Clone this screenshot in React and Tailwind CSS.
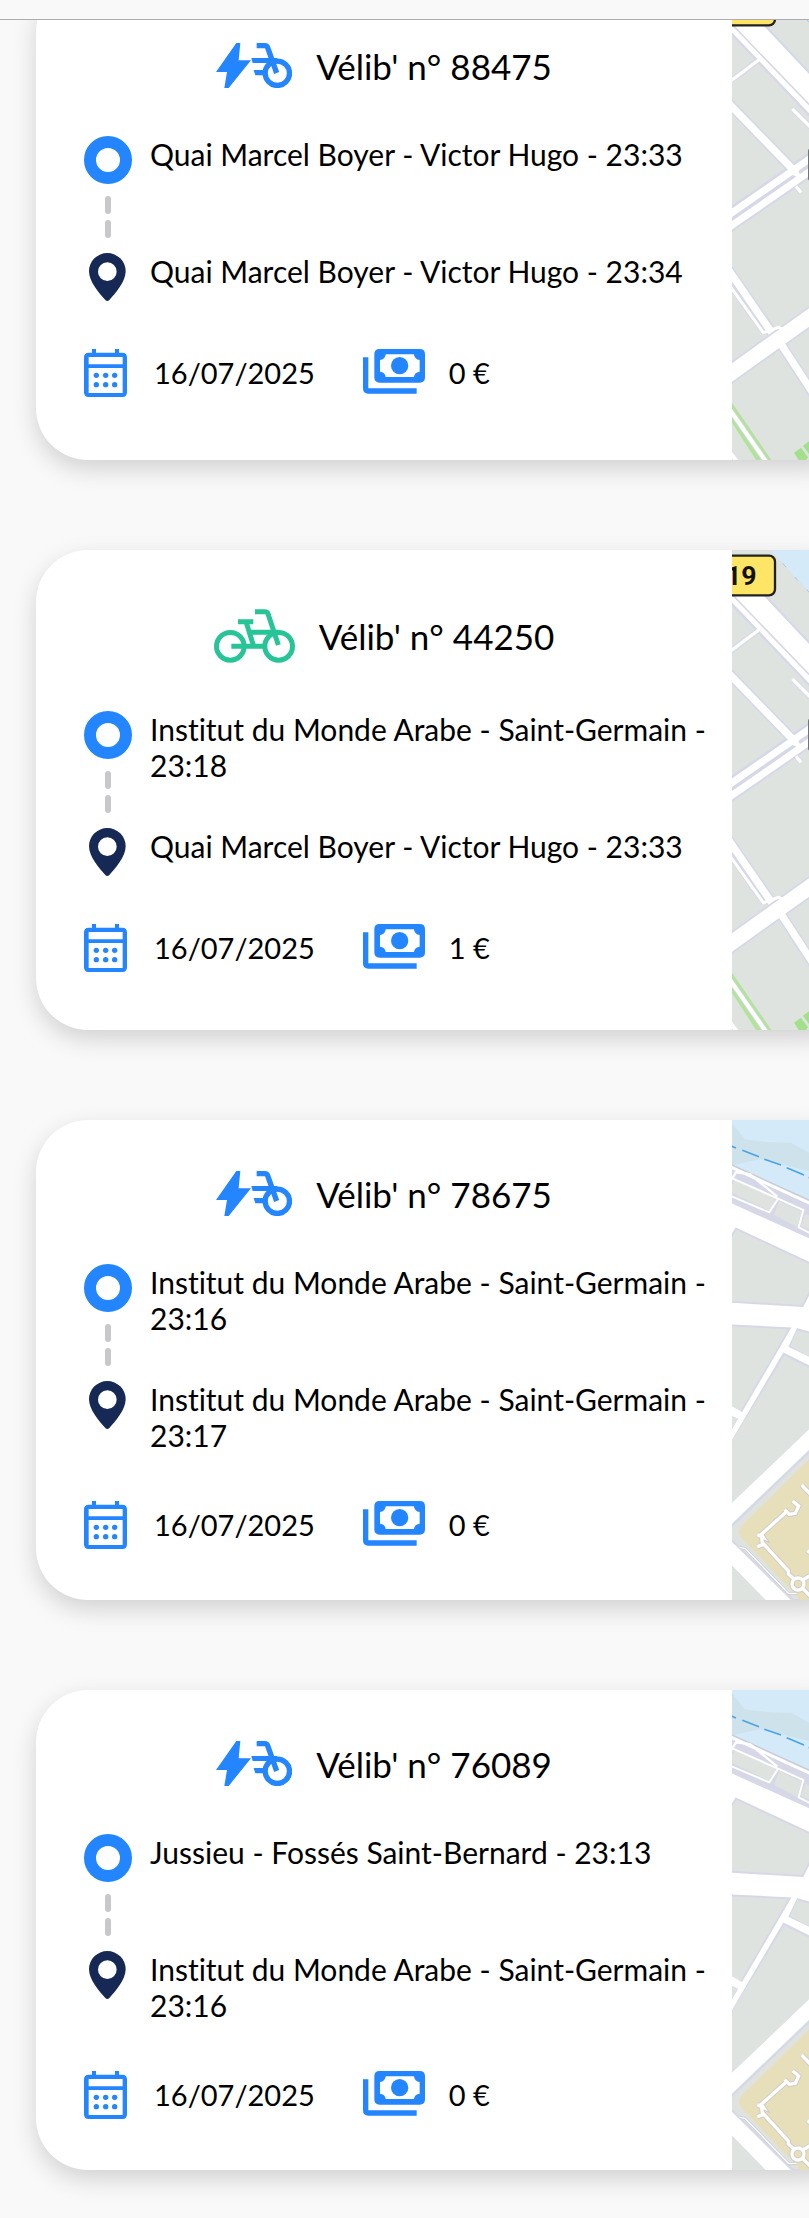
import React from 'react';

const trips = [
  {
    number: '88475',
    electric: true,
    from: 'Quai Marcel Boyer - Victor Hugo - 23:33',
    to: 'Quai Marcel Boyer - Victor Hugo - 23:34',
    date: '16/07/2025',
    price: '0 €',
    area: 'ivry',
  },
  {
    number: '44250',
    electric: false,
    from: 'Institut du Monde Arabe - Saint-Germain - 23:18',
    to: 'Quai Marcel Boyer - Victor Hugo - 23:33',
    date: '16/07/2025',
    price: '1 €',
    area: 'ivry',
  },
  {
    number: '78675',
    electric: true,
    from: 'Institut du Monde Arabe - Saint-Germain - 23:16',
    to: 'Institut du Monde Arabe - Saint-Germain - 23:17',
    date: '16/07/2025',
    price: '0 €',
    area: 'jussieu',
  },
  {
    number: '76089',
    electric: true,
    from: 'Jussieu - Fossés Saint-Bernard - 23:13',
    to: 'Institut du Monde Arabe - Saint-Germain - 23:16',
    date: '16/07/2025',
    price: '0 €',
    area: 'jussieu',
  },
];

const ElectricBikeIcon = () => (
  <svg className="w-[76px] h-[45px] shrink-0 text-[#2385ff]" viewBox="74 69 228 135" fill="none" aria-hidden="true">
    <path d="M135 69H147L142 121H179L112 204H99L107 156H74Z" fill="currentColor" />
    <path d="M180 114H258V129H184Z M187 150H222V166H192Z" fill="currentColor" />
    <circle cx="258" cy="160" r="36.5" stroke="currentColor" strokeWidth="16" />
    <path d="M196 77H221Q227 77 229 83L256 159" stroke="currentColor" strokeWidth="16" />
  </svg>
);

const BikeIcon = () => (
  <svg className="w-[81px] h-[54px] shrink-0 text-[#27c498]" viewBox="69 57 243 162" fill="none" aria-hidden="true">
    <g stroke="currentColor" strokeWidth="15">
      <circle cx="118" cy="169" r="41.5" />
      <circle cx="263" cy="169" r="41.5" />
      <path d="M192 65H222Q229 65 231 71L262 165" />
      <path d="M141 95H187M166 98L188 169M175 127H263M121 169H221" />
    </g>
  </svg>
);

const PinIcon = () => (
  <svg className="size-12 text-[#162955]" viewBox="72 429 144 144" fill="currentColor" aria-hidden="true">
    <path
      fillRule="evenodd"
      d="M136 570C118 550 87 516 87 484A55 55 0 0 1 197 484C197 516 166 550 148 570Q142 576 136 570ZM142 457A28 28 0 1 0 142 513A28 28 0 1 0 142 457Z"
    />
  </svg>
);

const CalendarIcon = () => (
  <svg className="w-[43px] h-12 shrink-0 text-[#2385ff]" viewBox="72 717 129 144" fill="currentColor" aria-hidden="true">
    <path
      fillRule="evenodd"
      d="M96 717H108V728H165V717H177V728H187Q201 728 201 742V847Q201 861 187 861H86Q72 861 72 847V742Q72 728 86 728H96ZM86 741V763H188V741ZM86 774V849H188V774Z"
    />
    <circle cx="109" cy="796" r="8" />
    <circle cx="137" cy="796" r="8" />
    <circle cx="164" cy="796" r="8" />
    <circle cx="109" cy="824" r="8" />
    <circle cx="137" cy="824" r="8" />
    <circle cx="164" cy="824" r="8" />
  </svg>
);

const MoneyIcon = () => (
  <svg className="w-[62px] h-12 shrink-0 text-[#2385ff]" viewBox="69 57 186 144" fill="currentColor" aria-hidden="true">
    <path
      fillRule="evenodd"
      d="M119 57H239Q255 57 255 73V142Q255 158 239 158H119Q103 158 103 142V73Q103 57 119 57ZM137 73A17 17 0 0 1 120 90V125A17 17 0 0 1 137 141H222A17 17 0 0 1 239 125V90A17 17 0 0 1 222 73Z"
    />
    <circle cx="179" cy="107" r="26" />
    <path d="M69 82H85V175H230V191H85Q69 191 69 175Z" />
  </svg>
);

/* Right bank around Quai Marcel Boyer */
const IvryMap = () => (
  <svg className="w-32 h-[480px] shrink-0 bg-[#dee3df]" viewBox="96 60 384 1440" aria-hidden="true">
    <path d="M212 60L327 185L480 345V60Z" fill="#d5eaf8" />
    <path d="M248 100L258 111M284 141L294 152M320 178L327 187" stroke="#9ccaf0" strokeWidth="3" />
    <g stroke="#d6d8e8" fill="none">
      <path d="M60 387L180 297" strokeWidth="17" />
      <path d="M60 403L290 640" strokeWidth="32" />
      <path d="M280 450L480 650" strokeWidth="16" />
      <path d="M60 801L480 510" strokeWidth="66" />
      <path d="M60 893L215 1118" strokeWidth="32" />
      <path d="M60 936L192 1120" strokeWidth="15" />
      <path d="M60 1263L480 963" strokeWidth="56" />
      <path d="M245 1155L480 1520" strokeWidth="31" />
      <path d="M285 675L303 697" strokeWidth="15" />
    </g>
    <path d="M60 170H170L480 500V625L60 185Z" fill="#fff" stroke="#d6d8e8" strokeWidth="7" />
    <path d="M96 193L480 592" stroke="#d6d8e8" strokeWidth="5" />
    <g stroke="#fff" fill="none">
      <path d="M60 387L180 297" strokeWidth="10" />
      <path d="M60 403L290 640" strokeWidth="22" />
      <path d="M280 450L480 650" strokeWidth="10" strokeLinecap="round" />
      <path d="M60 783L480 492M60 821L480 530" strokeWidth="21" />
      <path d="M272 622L296 648" strokeWidth="15" />
      <path d="M288 679L303 697" strokeWidth="10" />
      <path d="M60 893L215 1118" strokeWidth="22" />
      <path d="M60 936L190 1118L235 1102L250 1108" strokeWidth="9" />
      <path d="M60 1263L480 963" strokeWidth="45" />
      <path d="M243 1152L480 1517" strokeWidth="22" />
    </g>
    <path d="M96 1328L214 1500H168L96 1388Z" fill="#b2e39a" />
    <path d="M90 1350L198 1505" stroke="#d6d8e8" strokeWidth="17" />
    <path d="M90 1350L198 1505M90 1477L112 1506" stroke="#fff" strokeWidth="12" />
    <path d="M282 1478L303 1463L324 1492L318 1500H296Z M309 1457L345 1430L380 1480L340 1500Z" fill="#a3e08b" />
    <rect x="324" y="565" width="100" height="98" rx="8" fill="#70757a" />
    <rect x="-60" y="77" width="285" height="119" rx="18" fill="#ffe566" stroke="#222" strokeWidth="7" />
    <text x="170" y="165" textAnchor="end" className="font-['Roboto',sans-serif] text-[80px] font-bold" fill="#111">
      19
    </text>
  </svg>
);

/* Seine bank and campus around Jussieu */
const JussieuMap = () => (
  <svg className="w-32 h-[480px] shrink-0 bg-[#dee3df]" viewBox="96 60 384 1440" aria-hidden="true">
    <path d="M90 60H480V380L90 195Z" fill="#d5eaf8" />
    <path d="M90 62L135 118L200 126L275 129L330 160L480 210V250L180 178L96 196Z" fill="#cee2eb" />
    <path d="M96 139L108 144M127 151L177 170M193 178L243 195M260 203L312 225M326 232L376 255" stroke="#47a4e6" strokeWidth="5" />

    {/* Quay */}
    <path d="M96 196L480 372V520L96 312Z" fill="#d6d8e8" />
    <path d="M92 193L480 370" stroke="#c9cbd3" strokeWidth="4" />
    <path d="M108 236L228 297L207 332L96 278V255Z M238 304L304 334L292 382L222 344Z M317 342L480 415V450L302 378Z" fill="#dee3df" />
    <g stroke="#fff" fill="none">
      <path d="M90 200L480 379" strokeWidth="9" />
      <path d="M90 245L108 217L150 222L232 290" strokeWidth="7" />
      <path d="M90 232L234 296L208 337L90 287M234 296L310 330L296 382L340 405" strokeWidth="6" />
    </g>

    {/* Boulevard */}
    <path d="M90 308L480 484V640L327 700L90 690Z" fill="#fff" />
    <g fill="#dee3df" stroke="#d6d8e8" strokeWidth="6">
      <path d="M108 386L340 495V555L308 618L90 605V415Z" />
      <path d="M90 676L270 685L122 938L90 918Z" />
      <path d="M290 687L480 740V860L267 739Z" />
      <path d="M90 948L118 953L90 1002Z" />
      <path d="M252 763L480 875V845L90 1218V1028Z" />
      <path d="M480 910L90 1283V1315L280 1500H480Z" />
      <path d="M90 1388L205 1503H90Z" />
    </g>
    <g fill="#fff">
      <path d="M90 1214L480 842V903L90 1276Z" />
      <path d="M90 1320L278 1506H203L90 1390Z" />
      <path d="M90 915L132 940L118 958L90 945Z" />
      <path d="M274 683H292L265 740L480 846V872L250 757L90 1030V998Z" />
    </g>

    {/* Campus */}
    <path d="M480 928L128 1274Q110 1292 122 1310L285 1482L300 1500H480Z" fill="#e6dfb9" />
    <path d="M118 1342L135 1345L265 1480H290" stroke="#c9cbd3" strokeWidth="8" fill="none" />
    <path d="M118 1342L135 1345L265 1480H290" stroke="#fff" strokeWidth="4" fill="none" />
    <g fill="none" stroke="#cfcdc9" strokeWidth="16">
      <path d="M172 1304L190 1312L184 1303L262 1233M254 1229L268 1243L286 1240L296 1218L278 1203M172 1340L192 1333L187 1328L184 1303M187 1328L265 1413V1422L285 1440M305 1155L340 1192M322 1352L340 1365M308 1440L350 1415M308 1465L340 1498" />
      <circle cx="294" cy="1452" r="18" />
    </g>
    <g fill="none" stroke="#fff" strokeWidth="10">
      <path d="M172 1304L190 1312L184 1303L262 1233M254 1229L268 1243L286 1240L296 1218L278 1203M172 1340L192 1333L187 1328L184 1303M187 1328L265 1413V1422L285 1440M305 1155L340 1192M322 1352L340 1365M308 1440L350 1415M308 1465L340 1498" />
      <circle cx="294" cy="1452" r="18" />
    </g>
  </svg>
);

const TripCard = ({ trip }) => (
  <article className="flex min-h-[480px] -mr-[51px] rounded-[52px] bg-white shadow-[0_9px_24px_rgba(0,0,0,0.16)] overflow-hidden">
    <div className="flex-1 min-w-0 flex flex-col justify-center gap-12">
      <div className="flex items-center justify-center gap-6">
        {trip.electric ? <ElectricBikeIcon /> : <BikeIcon />}
        <h2 className="text-[35px] leading-[44px]">Vélib' n° {trip.number}</h2>
      </div>

      <ol className="pl-12 pr-6">
        <li className="flex gap-[18px]">
          <div className="flex flex-col items-center shrink-0">
            <span className="size-12 rounded-full border-12 border-[#2385ff]" />
            <span className="mt-3 w-1.5 h-[18px] rounded-full bg-[#c7c7cc]" />
            <span className="mt-1.5 mb-[15px] w-1.5 h-[18px] rounded-full bg-[#c7c7cc]" />
          </div>
          <p>{trip.from}</p>
        </li>
        <li className="flex gap-[18px]">
          <div className="w-12 h-12 shrink-0">
            <PinIcon />
          </div>
          <p>{trip.to}</p>
        </li>
      </ol>

      <div className="flex gap-12 px-12 text-[29px] leading-[36px]">
        <div className="flex items-center gap-[27px]">
          <CalendarIcon />
          <time dateTime="2025-07-16">{trip.date}</time>
        </div>
        <div className="flex items-center gap-6">
          <MoneyIcon />
          <span>{trip.price}</span>
        </div>
      </div>
    </div>

    {trip.area === 'ivry' ? <IvryMap /> : <JussieuMap />}
  </article>
);

const App = () => {
  return (
    <div className="min-h-screen bg-[#f9f9f9] text-black text-[30px] leading-[36px] font-['Lato',sans-serif] [font-variant-ligatures:none]">
      <header className="h-5 border-b border-[#acacae]" />

      {/* Trip list, scrolled under the header */}
      <main className="overflow-hidden">
        <div className="-mt-10 pl-9 pb-12 flex flex-col gap-[90px]">
          {trips.map((trip) => (
            <TripCard key={trip.number} trip={trip} />
          ))}
        </div>
      </main>
    </div>
  );
};

export default App;
